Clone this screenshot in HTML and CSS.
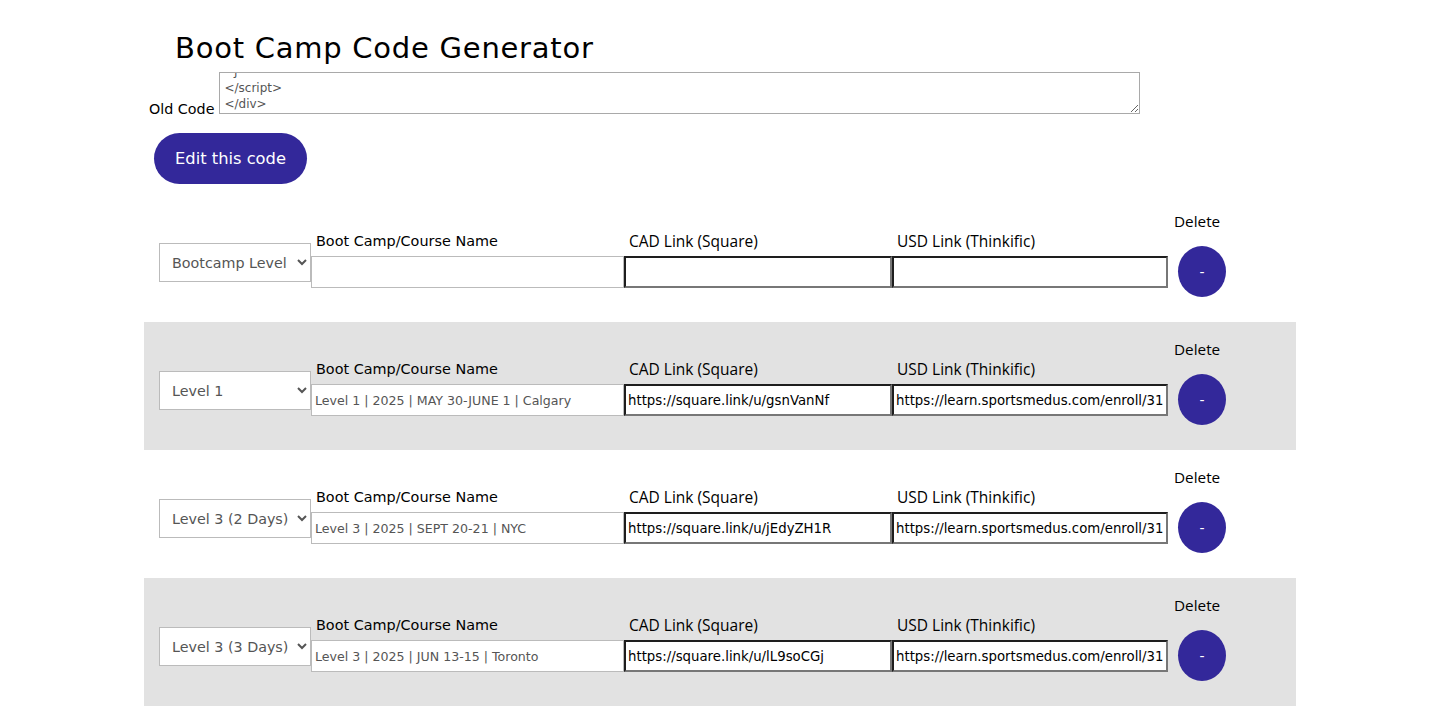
FILE: index.html
```html
<!DOCTYPE html>
<html lang="en">
<head>
<meta charset="utf-8">
<title>Boot Camp Code Generator</title>
<link rel="stylesheet" href="styles.css">
</head>
<body>
<div class="page">
  <h1 class="title">Boot Camp Code Generator</h1>
  <div class="old-code">
    <label class="old-label">Old Code</label>
    <div class="code-box">
      <div class="code-line cut">&nbsp;&nbsp;}</div>
      <div class="code-line">&lt;/script&gt;</div>
      <div class="code-line">&lt;/div&gt;</div>
    </div>
  </div>
  <button class="edit-btn">Edit this code</button>

  <div class="rows">
    <div class="row">
      <select class="level"><option>Bootcamp Level</option></select>
      <div class="field"><span class="flabel mont">Boot Camp/Course Name</span><input class="name-in" type="text" value=""></div>
      <div class="field"><span class="flabel">CAD Link (Square)</span><input class="link-in cad" type="text" value=""></div>
      <div class="field"><span class="flabel">USD Link (Thinkific)</span><input class="link-in usd" type="text" value=""></div>
      <div class="del"><span class="del-label">Delete</span><button class="del-btn">-</button></div>
    </div>
    <div class="row alt">
      <select class="level"><option>Level 1</option></select>
      <div class="field"><span class="flabel mont">Boot Camp/Course Name</span><input class="name-in" type="text" value="Level 1 | 2025 | MAY 30-JUNE 1 | Calgary"></div>
      <div class="field"><span class="flabel">CAD Link (Square)</span><input class="link-in cad" type="text" value="https://square.link/u/gsnVanNf"></div>
      <div class="field"><span class="flabel">USD Link (Thinkific)</span><input class="link-in usd" type="text" value="https://learn.sportsmedus.com/enroll/3131234"></div>
      <div class="del"><span class="del-label">Delete</span><button class="del-btn">-</button></div>
    </div>
    <div class="row">
      <select class="level"><option>Level 3 (2 Days)</option></select>
      <div class="field"><span class="flabel mont">Boot Camp/Course Name</span><input class="name-in" type="text" value="Level 3 | 2025 | SEPT 20-21 | NYC"></div>
      <div class="field"><span class="flabel">CAD Link (Square)</span><input class="link-in cad" type="text" value="https://square.link/u/jEdyZH1R"></div>
      <div class="field"><span class="flabel">USD Link (Thinkific)</span><input class="link-in usd" type="text" value="https://learn.sportsmedus.com/enroll/3131235"></div>
      <div class="del"><span class="del-label">Delete</span><button class="del-btn">-</button></div>
    </div>
    <div class="row alt">
      <select class="level"><option>Level 3 (3 Days)</option></select>
      <div class="field"><span class="flabel mont">Boot Camp/Course Name</span><input class="name-in" type="text" value="Level 3 | 2025 | JUN 13-15 | Toronto"></div>
      <div class="field"><span class="flabel">CAD Link (Square)</span><input class="link-in cad" type="text" value="https://square.link/u/lL9soCGj"></div>
      <div class="field"><span class="flabel">USD Link (Thinkific)</span><input class="link-in usd" type="text" value="https://learn.sportsmedus.com/enroll/3131236"></div>
      <div class="del"><span class="del-label">Delete</span><button class="del-btn">-</button></div>
    </div>
  </div>
</div>
</body>
</html>
```
FILE: styles.css
```css
html, body {
  margin: 0;
  padding: 0;
  background: #ffffff;
}
body {
  font-family: "DejaVu Sans", "Noto Sans", sans-serif;
  color: #000;
}
.page {
  width: 1152px;
  margin: 0 auto;
}
.title {
  margin: 0;
  padding: 29px 0 0 31px;
  font-size: 29px;
  line-height: 38px;
  font-weight: 400;
  letter-spacing: 0.75px;
}
.old-code {
  display: flex;
  align-items: flex-end;
  margin-top: 5px;
  padding-left: 5px;
}
.old-label {
  font-size: 14.3px;
  line-height: 16px;
  margin-right: 5px;
  margin-bottom: -3px;
}
.code-box {
  width: 915px;
  height: 39px;
  border: 1px solid #a9a9a9;
  padding: 0 0 1px 4px;
  display: flex;
  flex-direction: column;
  justify-content: flex-end;
  overflow: hidden;
  resize: both;
  font-size: 12px;
  line-height: 16px;
  color: #555;
}
.code-line {
  white-space: pre;
  flex-shrink: 0;
}
.edit-btn {
  display: block;
  margin: 19px 0 0 10px;
  width: 153px;
  height: 51px;
  border: none;
  border-radius: 26px;
  background: #33289a;
  color: #fff;
  font-family: "DejaVu Sans", "Noto Sans", sans-serif;
  font-size: 16.3px;
  padding: 0;
}
.rows {
  margin-top: 10px;
}
.row {
  display: flex;
  align-items: flex-start;
  height: 128px;
  padding-left: 15px;
  box-sizing: border-box;
}
.row.alt {
  background: #e2e2e2;
}
.level {
  margin-top: 49px;
  width: 152px;
  height: 39px;
  border: 1px solid #bbbbbb;
  border-radius: 0;
  background: #fff;
  color: #555;
  font-family: "DejaVu Sans", "Noto Sans", sans-serif;
  font-size: 14.3px;
  padding: 0 4px 0 8px;
}
.field {
  display: flex;
  flex-direction: column;
  margin-top: 37px;
}
.flabel {
  font-family: "Open Sans", "Noto Sans", sans-serif;
  font-size: 15.5px;
  line-height: 20px;
  padding-left: 5px;
  margin-bottom: 5px;
  white-space: nowrap;
}
.flabel.mont {
  font-family: "DejaVu Sans", "Noto Sans", sans-serif;
  font-size: 14.4px;
}
.name-in {
  width: 313px;
  height: 32px;
  box-sizing: border-box;
  border: 1px solid #bbbbbb;
  border-radius: 0;
  padding: 0 3px;
  font-family: "DejaVu Sans", "Noto Sans", sans-serif;
  font-size: 12.6px;
  color: #555;
  background: #fff;
  outline: none;
}
.link-in {
  height: 32px;
  box-sizing: border-box;
  border-style: solid;
  border-width: 2px;
  border-color: #1e1e1e #777777 #777777 #1e1e1e;
  border-radius: 0;
  padding: 0 2px;
  font-family: "DejaVu Sans", "Noto Sans", sans-serif;
  font-size: 13.3px;
  color: #000;
  background: #fff;
  outline: none;
}
.link-in.cad {
  width: 268px;
}
.link-in.usd {
  width: 276px;
  margin-left: 0;
}
.del {
  display: flex;
  flex-direction: column;
  align-items: flex-start;
  margin-top: 17px;
  margin-left: 6px;
}
.del-label {
  font-family: "Open Sans", "Noto Sans", sans-serif;
  font-size: 15.3px;
  line-height: 20px;
}
.del-btn {
  margin: 15px 0 0 4px;
  width: 48px;
  height: 51px;
  border: none;
  border-radius: 50%;
  background: #33289a;
  color: #fff;
  font-size: 14px;
  padding: 0;
  font-family: "DejaVu Sans", sans-serif;
}
```
